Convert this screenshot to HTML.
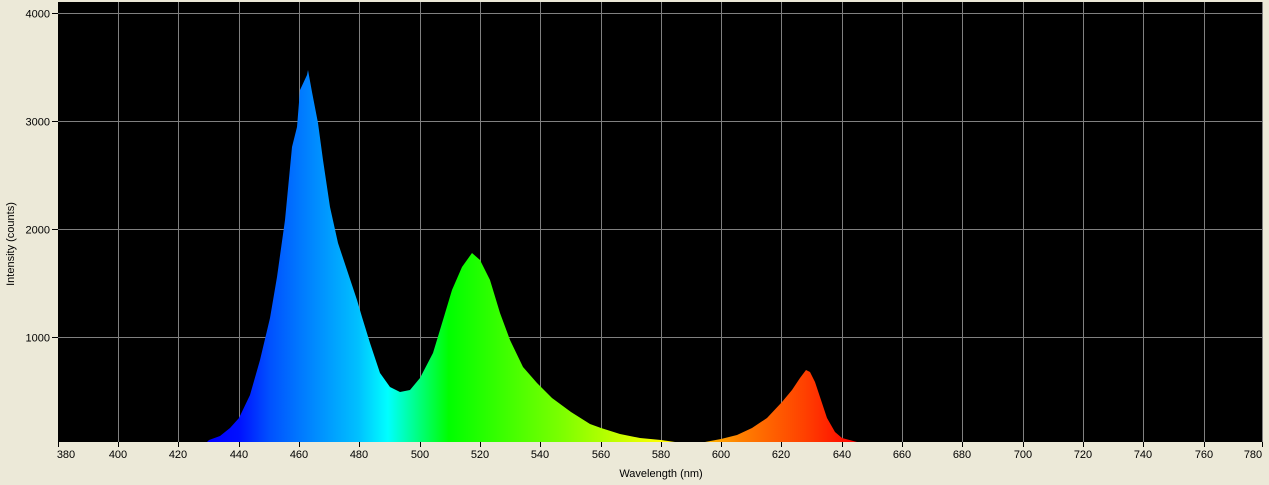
<!DOCTYPE html>
<html><head><meta charset="utf-8"><style>
html,body{margin:0;padding:0;background:#ECE9D8;}
body{width:1269px;height:485px;overflow:hidden;}
svg{display:block;}
text{font-family:"Liberation Sans",sans-serif;font-size:11px;fill:#000;}
</style></head><body>
<svg width="1269" height="485" viewBox="0 0 1269 485">
<defs>
<linearGradient id="sp" gradientUnits="userSpaceOnUse" x1="209" y1="0" x2="857" y2="0">
<stop offset="0" stop-color="#0000ff"/>
<stop offset="0.046" stop-color="#0010ff"/>
<stop offset="0.093" stop-color="#0050ff"/>
<stop offset="0.14" stop-color="#0078ff"/>
<stop offset="0.23" stop-color="#00c0ff"/>
<stop offset="0.276" stop-color="#00ffff"/>
<stop offset="0.37" stop-color="#00ff00"/>
<stop offset="0.55" stop-color="#80ff00"/>
<stop offset="0.70" stop-color="#ffff00"/>
<stop offset="0.82" stop-color="#ff8000"/>
<stop offset="0.92" stop-color="#ff4000"/>
<stop offset="1" stop-color="#ff0000"/>
</linearGradient>
<clipPath id="pc"><rect x="58" y="2" width="1205" height="440"/></clipPath>
</defs>
<rect x="58" y="2" width="1205" height="440" fill="#000"/>
<g stroke="#808080" stroke-width="1">
<path d="M118.5 2V442M178.5 2V442M239.5 2V442M299.5 2V442M359.5 2V442M420.5 2V442M480.5 2V442M540.5 2V442M601.5 2V442M661.5 2V442M721.5 2V442M781.5 2V442M842.5 2V442M902.5 2V442M962.5 2V442M1023.5 2V442M1083.5 2V442M1143.5 2V442M1204.5 2V442M1262.5 2V442"/>
<path d="M58 13.5H1263M58 121.5H1263M58 229.5H1263M58 337.5H1263"/>
</g>
<g clip-path="url(#pc)">
<polygon fill="url(#sp)" points="207,442 209,440 220,436 230,428 239,418 250,395 260,360 270,318 277,277 285,220 292,147 297,127 300,90 307,75 308,70 312,92 318,123 323,160 330,207 338,243 347,270 357,300 362,317 370,343 380,373 390,387 400,392 410,390 420,378 433,353 443,320 452,290 462,267 472,253 480,260 490,280 500,313 510,340 523,367 537,383 552,398 571,412 590,424 601,428 620,434 640,438 661,440 675,442 705,442 721,439 737,435 752,428 767,418 782,402 792,390 800,378 806,370 810,372 815,382 820,397 827,418 835,432 842,438 857,442"/>
</g>
<g stroke="#000" stroke-width="1">
<path d="M52 13.5H58M52 121.5H58M52 229.5H58M52 337.5H58"/>
<path d="M58.5 442V447M118.5 442V447M178.5 442V447M239.5 442V447M299.5 442V447M359.5 442V447M420.5 442V447M480.5 442V447M540.5 442V447M601.5 442V447M661.5 442V447M721.5 442V447M781.5 442V447M842.5 442V447M902.5 442V447M962.5 442V447M1023.5 442V447M1083.5 442V447M1143.5 442V447M1204.5 442V447M1262.5 442V447"/>
</g>
<g text-anchor="end">
<text x="50" y="17.5">4000</text>
<text x="50" y="125.5">3000</text>
<text x="50" y="233.5">2000</text>
<text x="50" y="341.5">1000</text>
</g>
<g text-anchor="middle">
<text x="66" y="458">380</text>
<text x="118" y="458">400</text>
<text x="178" y="458">420</text>
<text x="239" y="458">440</text>
<text x="299" y="458">460</text>
<text x="359" y="458">480</text>
<text x="420" y="458">500</text>
<text x="480" y="458">520</text>
<text x="540" y="458">540</text>
<text x="601" y="458">560</text>
<text x="661" y="458">580</text>
<text x="721" y="458">600</text>
<text x="781" y="458">620</text>
<text x="842" y="458">640</text>
<text x="902" y="458">660</text>
<text x="962" y="458">680</text>
<text x="1023" y="458">700</text>
<text x="1083" y="458">720</text>
<text x="1143" y="458">740</text>
<text x="1204" y="458">760</text>
<text x="1253" y="458">780</text>
<text x="661" y="477">Wavelength (nm)</text>
<text transform="translate(14,244) rotate(-90)">Intensity (counts)</text>
</g>
</svg>
</body></html>
